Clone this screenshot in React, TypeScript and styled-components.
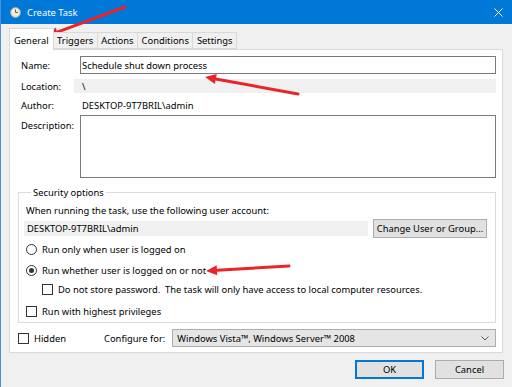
import React from 'react';
import styled, { createGlobalStyle } from 'styled-components';

const GlobalStyle = createGlobalStyle`
	html, body {
		margin: 0;
		padding: 0;
		background: #f0f0f0;
	}
	body {
		font-family: 'Noto Sans', 'Open Sans', sans-serif;
		font-size: 9.4px;
		color: #000;
	}
`;

const Window = styled.div`
	position: relative;
	width: 512px;
	height: 387px;
	box-sizing: border-box;
	border-left: 1px solid #4a8fd8;
	background: #f0f0f0;
	overflow: hidden;
`;

const TitleBar = styled.div`
	display: flex;
	align-items: center;
	height: 24px;
	background: #0078d7;
	color: #fff;
	padding: 0 9px 0 9px;
	font-size: 9.4px;
`;

const TitleText = styled.div`
	margin-left: 6px;
	flex: 1;
`;

const Body = styled.div`
	padding: 3px 9px 0 8px;
`;

const TabRow = styled.div`
	display: flex;
	align-items: flex-end;
	height: 22px;
`;

const Tab = styled.div<{ $active?: boolean }>`
	box-sizing: border-box;
	height: ${(p) => (p.$active ? '22px' : '17px')};
	padding: ${(p) => (p.$active ? '2px 4px 0 4px' : '0 3.5px')};
	display: flex;
	align-items: center;
	background: ${(p) => (p.$active ? '#fff' : '#f0f0f0')};
	border: 1px solid #d9d9d9;
	border-bottom: ${(p) => (p.$active ? 'none' : '1px solid #d9d9d9')};
	margin-right: -1px;
	position: relative;
	z-index: ${(p) => (p.$active ? 2 : 1)};
	margin-bottom: ${(p) => (p.$active ? '-1px' : '0')};
`;

const Panel = styled.div`
	box-sizing: border-box;
	height: 304px;
	background: #fff;
	border: 1px solid #d9d9d9;
	padding: 6px 6px 0 8px;
	position: relative;
`;

const FormGrid = styled.div`
	display: grid;
	grid-template-columns: 62px 1fr;
	row-gap: 5px;
	align-items: center;
`;

const Label = styled.div<{ $top?: boolean }>`
	align-self: ${(p) => (p.$top ? 'start' : 'center')};
	padding-left: 3px;
	margin-top: ${(p) => (p.$top ? '2px' : '0')};
`;

const TextInput = styled.div`
	box-sizing: border-box;
	height: 18px;
	border: 1px solid #7a7a7a;
	padding: 0 1px;
	display: flex;
	align-items: center;
`;

const ReadOnly = styled.div<{ $gray?: boolean }>`
	height: 14px;
	display: flex;
	align-items: center;
	padding-left: 8px;
	margin-left: -6px;
	background: ${(p) => (p.$gray ? '#f0f0f0' : 'transparent')};
`;

const TextArea = styled.div`
	box-sizing: border-box;
	height: 63px;
	border: 1px solid #7a7a7a;
	margin-top: -2px;
`;

const GroupBox = styled.fieldset`
	margin: 8px 0 0 0;
	padding: 5px 8px 8px 7px;
	border: 1px solid #dcdcdc;
	height: 137px;
	box-sizing: border-box;
`;

const Legend = styled.legend`
	padding: 0 2px;
	margin-left: 5px;
`;

const AccountRow = styled.div`
	display: flex;
	align-items: center;
	margin-top: 2px;
	gap: 5px;
`;

const AccountField = styled.div`
	flex: 1;
	height: 15px;
	background: #f0f0f0;
	display: flex;
	align-items: center;
	padding-left: 3px;
	margin-left: -2px;
`;

const Button = styled.div<{ $focus?: boolean; $w?: number }>`
	box-sizing: border-box;
	width: ${(p) => p.$w ?? 69}px;
	height: 19px;
	display: flex;
	align-items: center;
	justify-content: center;
	background: #e1e1e1;
	border: 1px solid ${(p) => (p.$focus ? '#0078d7' : '#adadad')};
	box-shadow: ${(p) => (p.$focus ? 'inset 0 0 0 1px #0078d7' : 'none')};
`;

const OptionRow = styled.div<{ $indent?: number; $mt?: number }>`
	display: flex;
	align-items: center;
	gap: 5px;
	margin-left: ${(p) => p.$indent ?? 0}px;
	margin-top: ${(p) => p.$mt ?? 0}px;
`;

const Radio = styled.span<{ $on?: boolean }>`
	box-sizing: border-box;
	width: 11px;
	height: 11px;
	border-radius: 50%;
	border: 1px solid #333;
	display: flex;
	align-items: center;
	justify-content: center;
	&::after {
		content: '';
		width: 5px;
		height: 5px;
		border-radius: 50%;
		background: ${(p) => (p.$on ? '#333' : 'transparent')};
	}
`;

const Check = styled.span`
	box-sizing: border-box;
	width: 11px;
	height: 11px;
	border: 1px solid #333;
	background: #fff;
`;

const ConfigRow = styled.div`
	display: flex;
	align-items: center;
	margin-top: 6px;
`;

const ConfigLabel = styled.div`
	margin-left: 38px;
	margin-right: 7px;
`;

const Combo = styled.div`
	box-sizing: border-box;
	flex: 1;
	height: 18px;
	background: #e5e5e5;
	border: 1px solid #adadad;
	display: flex;
	align-items: center;
	padding: 0 6px 0 4px;
	justify-content: space-between;
`;

const Footer = styled.div`
	display: flex;
	justify-content: flex-end;
	gap: 11px;
	padding: 7px 0 0 0;
	margin-right: -1px;
`;

const ArrowLayer = styled.svg`
	position: absolute;
	left: 0;
	top: 0;
	pointer-events: none;
`;

const Arrow: React.FC<{ x1: number; y1: number; x2: number; y2: number }> = ({ x1, y1, x2, y2 }) => {
	const a = Math.atan2(y2 - y1, x2 - x1);
	const len = 11;
	const w = 5;
	const bx = x2 - Math.cos(a) * len;
	const by = y2 - Math.sin(a) * len;
	const p1 = `${bx + Math.sin(a) * w},${by - Math.cos(a) * w}`;
	const p2 = `${bx - Math.sin(a) * w},${by + Math.cos(a) * w}`;
	return (
		<g>
			<line x1={x1} y1={y1} x2={bx} y2={by} stroke="#e8262a" strokeWidth={3} strokeLinecap="round" />
			<polygon points={`${x2},${y2} ${p1} ${p2}`} fill="#e8262a" />
		</g>
	);
};

const App: React.FC = () => (
	<Window>
		<GlobalStyle />
		<TitleBar>
			<svg width="11" height="11" viewBox="0 0 11 11">
				<circle cx="5.5" cy="5.5" r="4.8" fill="#f3ead8" stroke="#c9b991" />
				<path d="M5.5 2.5 V5.5 H8" stroke="#6d6048" strokeWidth="1" fill="none" />
			</svg>
			<TitleText>Create Task</TitleText>
			<svg width="9" height="9" viewBox="0 0 9 9">
				<path d="M0.5 0.5 L8.5 8.5 M8.5 0.5 L0.5 8.5" stroke="#fff" strokeWidth="1" />
			</svg>
		</TitleBar>
		<Body>
			<TabRow>
				<Tab $active>General</Tab>
				<Tab>Triggers</Tab>
				<Tab>Actions</Tab>
				<Tab>Conditions</Tab>
				<Tab>Settings</Tab>
			</TabRow>
			<Panel>
				<FormGrid>
					<Label>Name:</Label>
					<TextInput>Schedule shut down process</TextInput>
					<Label>Location:</Label>
					<ReadOnly $gray>\</ReadOnly>
					<Label>Author:</Label>
					<ReadOnly>DESKTOP-9T7BRIL\admin</ReadOnly>
					<Label $top>Description:</Label>
					<TextArea />
				</FormGrid>
				<GroupBox>
					<Legend>Security options</Legend>
					<div>When running the task, use the following user account:</div>
					<AccountRow>
						<AccountField>DESKTOP-9T7BRIL\admin</AccountField>
						<Button $w={114}>Change User or Group...</Button>
					</AccountRow>
					<OptionRow $mt={5}>
						<Radio />
						Run only when user is logged on
					</OptionRow>
					<OptionRow $mt={8}>
						<Radio $on />
						Run whether user is logged on or not
					</OptionRow>
					<OptionRow $indent={16} $mt={6}>
						<Check />
						Do not store password.&nbsp; The task will only have access to local computer resources.
					</OptionRow>
					<OptionRow $mt={9}>
						<Check />
						Run with highest privileges
					</OptionRow>
				</GroupBox>
				<ConfigRow>
					<OptionRow>
						<Check />
						Hidden
					</OptionRow>
					<ConfigLabel>Configure for:</ConfigLabel>
					<Combo>
						<span>Windows Vista™, Windows Server™ 2008</span>
						<svg width="8" height="5" viewBox="0 0 8 5">
							<path d="M0.5 0.5 L4 4 L7.5 0.5" stroke="#555" fill="none" />
						</svg>
					</Combo>
				</ConfigRow>
			</Panel>
			<Footer>
				<Button $focus>OK</Button>
				<Button>Cancel</Button>
			</Footer>
		</Body>
		<ArrowLayer width="512" height="387">
			<Arrow x1={124} y1={7} x2={46} y2={36} />
			<Arrow x1={297} y1={94} x2={204} y2={77} />
			<Arrow x1={288} y1={266} x2={205} y2={271} />
		</ArrowLayer>
	</Window>
);

export default App;
